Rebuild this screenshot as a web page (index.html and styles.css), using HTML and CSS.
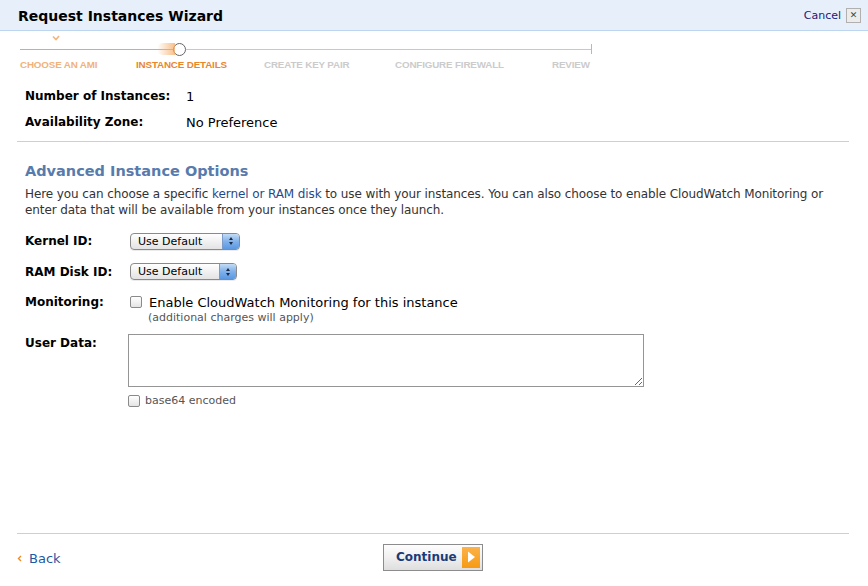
FILE: index.html
```html
<!DOCTYPE html>
<html>
<head>
<meta charset="utf-8">
<link rel="stylesheet" href="styles.css">
</head>
<body>
<div class="page">
  <header class="topbar">
    <h1 class="title">Request Instances Wizard</h1>
    <div class="cancel">
      <a class="cancel-link">Cancel</a>
      <span class="close-box">&#x2715;</span>
    </div>
  </header>

  <div class="progress">
    <div class="check-row">
      <svg class="check" width="8" height="6" viewBox="0 0 8 6"><path d="M1 1.5 L4 4.5 L7 1" fill="none" stroke="#f2b57a" stroke-width="1.6"/></svg>
    </div>
    <div class="track">
      <div class="seg-done"></div>
      <div class="node"></div>
      <div class="seg-todo"></div>
      <div class="tick"></div>
    </div>
    <div class="labels">
      <span class="lbl done">CHOOSE AN AMI</span>
      <span class="lbl current">INSTANCE DETAILS</span>
      <span class="lbl todo">CREATE KEY PAIR</span>
      <span class="lbl todo">CONFIGURE FIREWALL</span>
      <span class="lbl todo">REVIEW</span>
    </div>
  </div>

  <main class="content">
    <div class="summary">
      <div class="s-label">Number of Instances:</div>
      <div class="s-value">1</div>
      <div class="s-label">Availability Zone:</div>
      <div class="s-value">No Preference</div>
    </div>

    <hr class="rule">

    <section class="advanced">
      <h2 class="adv-title">Advanced Instance Options</h2>
      <p class="adv-desc">Here you can choose a specific <a class="link">kernel or RAM disk</a> to use with your instances. You can also choose to enable CloudWatch Monitoring or enter data that will be available from your instances once they launch.</p>

      <div class="form">
        <div class="f-label">Kernel ID:</div>
        <div class="f-ctrl">
          <span class="select w110"><span class="sel-text">Use Default</span><span class="stepper"><i class="up"></i><i class="down"></i></span></span>
        </div>

        <div class="f-label">RAM Disk ID:</div>
        <div class="f-ctrl">
          <span class="select w107"><span class="sel-text">Use Default</span><span class="stepper"><i class="up"></i><i class="down"></i></span></span>
        </div>

        <div class="f-label">Monitoring:</div>
        <div class="f-ctrl mon">
          <div class="mon-line"><span class="cbox"></span><span class="mon-text">Enable CloudWatch Monitoring for this instance</span></div>
          <div class="mon-note">(additional charges will apply)</div>
        </div>

        <div class="f-label ud">User Data:</div>
        <div class="f-ctrl ud-ctrl">
          <textarea class="userdata"></textarea>
          <div class="b64"><span class="cbox small"></span><span class="b64-text">base64 encoded</span></div>
        </div>
      </div>
    </section>
  </main>

  <footer class="footer">
    <a class="back"><svg width="5" height="7" viewBox="0 0 5 7"><path d="M4 1 L1.5 3.5 L4 6" fill="none" stroke="#f08a24" stroke-width="1.4"/></svg><span>Back</span></a>
    <button class="continue"><span class="cont-text">Continue</span><span class="cont-arrow"><svg width="9" height="12" viewBox="0 0 9 12"><path d="M1 0.5 L8 6 L1 11.5 Z" fill="#fff"/></svg></span></button>
    <span></span>
  </footer>
</div>
</body>
</html>
```

FILE: styles.css
```css
html, body {
  margin: 0;
  padding: 0;
  background: #fff;
}
body {
  font-family: "DejaVu Sans", Verdana, sans-serif;
  color: #000;
}
.page {
  display: flex;
  flex-direction: column;
  height: 586px;
  width: 868px;
  overflow: hidden;
}

/* header */
.topbar {
  height: 30px;
  background: #e7effa;
  border-bottom: 1px solid #bcd6f0;
  display: flex;
  align-items: center;
  justify-content: space-between;
  padding: 0 7px 0 18px;
}
.title {
  margin: 0;
  margin-top: 1px;
  font-size: 14px;
  font-weight: bold;
}
.cancel {
  display: flex;
  align-items: center;
  gap: 5px;
}
.cancel-link {
  font-size: 11px;
  color: #1a1a78;
}
.close-box {
  width: 13px;
  height: 13px;
  border: 1px solid #b0b0b0;
  background: #ececec;
  font-size: 9px;
  line-height: 13px;
  text-align: center;
  color: #444;
}

/* progress */
.progress {
  padding: 3px 0 0 20px;
}
.check-row {
  height: 7px;
  padding-left: 32px;
}
.check {
  display: block;
  margin-top: 1px;
}
.track {
  width: 572px;
  height: 14px;
  display: flex;
  align-items: center;
}
.seg-done {
  width: 153px;
  height: 1px;
  background: #f1a55c;
}
.node {
  position: relative;
  width: 11px;
  height: 11px;
  border: 1.5px solid #666;
  border-radius: 50%;
  background: #fff;
  flex: none;
}
.node::before {
  content: "";
  position: absolute;
  right: 10px;
  top: -1px;
  width: 18px;
  height: 12px;
  border-radius: 6px 0 0 6px;
  background: linear-gradient(to right, rgba(246,170,100,0), rgba(246,170,100,0.75));
}
.seg-todo {
  flex: 1;
  height: 1px;
  background: #c8c8c8;
}
.tick {
  width: 1px;
  height: 10px;
  background: #b8b8b8;
}
.labels {
  display: grid;
  grid-template-columns: 116px 128px 131px 157px auto;
  margin-top: 3px;
  font-family: "Liberation Sans", Arial, sans-serif;
  font-weight: bold;
  font-size: 9.8px;
  line-height: 12px;
  letter-spacing: -0.15px;
}
.lbl.done { color: #f1b27a; }
.lbl.current { color: #e9862c; }
.lbl.todo { color: #cbcbcb; }

/* content */
.content {
  flex: 1;
}
.summary {
  display: grid;
  grid-template-columns: 161px auto;
  grid-auto-rows: 26px;
  align-items: center;
  padding: 12px 0 0 25px;
}
.s-label {
  font-weight: bold;
  font-size: 12px;
}
.s-value {
  font-size: 13px;
}
.rule {
  border: 0;
  height: 1px;
  background: #cfcfcf;
  margin: 6px 19px 0 17px;
}
.advanced {
  padding: 19px 30px 0 25px;
}
.adv-title {
  margin: 0;
  font-size: 14.5px;
  line-height: 20px;
  color: #587bad;
  font-weight: bold;
}
.adv-desc {
  margin: 5px 0 0 0;
  font-size: 12px;
  line-height: 16px;
  color: #333;
  letter-spacing: -0.1px;
}
.link {
  color: #1f4a8a;
}
.form {
  display: grid;
  grid-template-columns: 103px auto;
  row-gap: 10.5px;
  margin-top: 13px;
  align-items: start;
}
.f-label {
  font-weight: bold;
  font-size: 12px;
  line-height: 20px;
}
.f-ctrl {
  min-height: 20px;
  display: flex;
  align-items: center;
}
.select {
  margin-left: 2px;
  height: 15px;
  border: 1px solid #8a8a8a;
  border-radius: 4px;
  background: linear-gradient(#ffffff, #f1f1f1 50%, #e3e3e3);
  display: flex;
  align-items: center;
  overflow: hidden;
  box-shadow: 0 1px 0 rgba(0,0,0,0.08);
}
.w110 { width: 108px; }
.w107 { width: 105px; }
.sel-text {
  flex: 1;
  font-size: 11px;
  padding-left: 7px;
  line-height: 15px;
}
.stepper {
  width: 16px;
  height: 15px;
  border-left: 1px solid #7d9bc8;
  background: linear-gradient(#c3dbf6, #7fb1ea 50%, #5b98e2);
  display: flex;
  flex-direction: column;
  align-items: center;
  justify-content: center;
  gap: 2px;
}
.stepper i {
  display: block;
  width: 0;
  height: 0;
  border-left: 2.5px solid transparent;
  border-right: 2.5px solid transparent;
}
.stepper .up { border-bottom: 3px solid #1b2a44; }
.stepper .down { border-top: 3px solid #1b2a44; }

.mon {
  display: block;
}
.mon-line {
  display: flex;
  align-items: center;
  height: 20px;
  margin-left: 2px;
}
.cbox {
  width: 10px;
  height: 10px;
  border: 1px solid #8a8a8a;
  border-radius: 2px;
  background: linear-gradient(#ffffff, #e4e4e4);
  flex: none;
}
.mon-text {
  font-size: 13px;
  margin-left: 7px;
}
.mon-note {
  font-size: 11px;
  line-height: 12px;
  color: #555;
  padding-left: 20px;
}
.f-label.ud {
  line-height: 16px;
  margin-top: 0;
}
.ud-ctrl {
  display: block;
  margin-top: -1px;
}
.userdata {
  display: block;
  width: 514px;
  height: 51px;
  border: 1px solid #959595;
  margin: 0;
  padding: 0;
  resize: both;
  font-family: "DejaVu Sans", sans-serif;
}
.b64 {
  display: flex;
  align-items: center;
  margin-top: 8px;
  height: 12px;
}
.b64-text {
  font-size: 11px;
  color: #555;
  margin-left: 5px;
}

/* footer */
.footer {
  margin: 0 19px 15px 17px;
  border-top: 1px solid #cfcfcf;
  padding-top: 10px;
  display: grid;
  grid-template-columns: 1fr auto 1fr;
  align-items: center;
}
.back {
  display: flex;
  align-items: center;
  gap: 7px;
  font-size: 13px;
  color: #1a5aa6;
  margin-top: 1px;
}
.continue {
  width: 100px;
  height: 27px;
  border: 1px solid #8c8c8c;
  background: linear-gradient(#fdfdfd, #f0f0f0 50%, #dedede);
  padding: 0 2px 0 12px;
  display: flex;
  align-items: center;
  justify-content: space-between;
  font-family: "DejaVu Sans", Verdana, sans-serif;
}
.cont-text {
  font-size: 12px;
  font-weight: bold;
  color: #1b3b78;
  margin-top: -2px;
}
.cont-arrow {
  width: 18px;
  height: 21px;
  background: linear-gradient(#fbb24a, #f79a12);
  display: flex;
  align-items: center;
  justify-content: center;
  margin-top: -1px;
}
```
